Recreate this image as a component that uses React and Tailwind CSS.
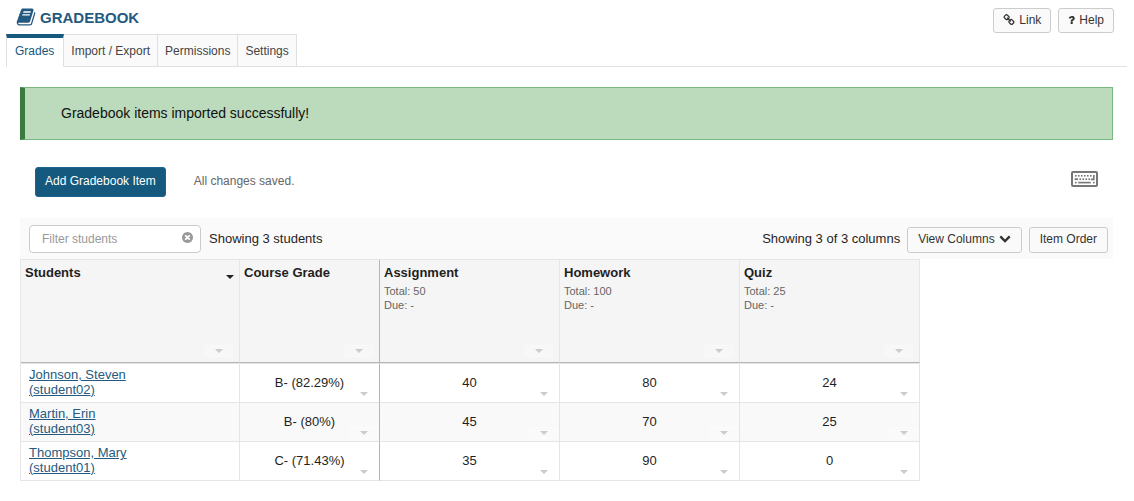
import React from "react";

const FONT = "font-['Liberation_Sans',Arial,sans-serif]";

const PATHS = {
  book: "M1703 478q40 57 18 129l-275 906q-19 64-76.5 107.5t-122.5 43.5h-923q-77 0-148.5-53.5t-99.5-131.5q-24-67-2-127 0-4 3-27t4-37q1-8-3-21.5t-3-19.5q2-11 8-21t16.5-23.5 16.5-23.5q23-38 45-91.5t30-91.5q3-10 .5-30t-.5-28q3-11 17-28t17-23q21-36 42-92t25-90q1-9-2.5-32t.5-28q4-13 22-30.5t22-22.5q19-26 42.5-84.5t27.5-96.5q1-8-3-25.5t-2-26.5q2-8 9-18t18-23 17-21q8-12 16.5-30.5t15-35 16-36 19.5-32 26.5-23.5 36-11.5 47.5 5.5l-1 3q38-9 51-9h761q74 0 114 56t18 130l-274 906q-36 119-71.5 153.5t-128.5 34.5h-869q-27 0-38 15-11 16-1 43 24 70 144 70h923q29 0 56-15.5t35-41.5l300-987q7-22 5-57 38 15 59 43zm-1064 2q-4 13 2 22.5t20 9.5h608q13 0 25.5-9.5t16.5-22.5l21-64q4-13-2-22.5t-20-9.5h-608q-13 0-25.5 9.5t-16.5 22.5zm-83 256q-4 13 2 22.5t20 9.5h608q13 0 25.5-9.5t16.5-22.5l21-64q4-13-2-22.5t-20-9.5h-608q-13 0-25.5 9.5t-16.5 22.5z",
  link: "M1520 1216q0-40-28-68l-208-208q-28-28-68-28-42 0-72 32 3 3 19 18.5t21.5 21.5 15 19 13 25.5 3.5 27.5q0 40-28 68t-68 28q-15 0-27.5-3.5t-25.5-13-19-15-21.5-21.5-18.5-19q-33 31-33 73 0 40 28 68l206 207q27 27 68 27 40 0 68-26l147-146q28-28 28-67zm-703-705q0-40-28-68l-206-207q-28-28-68-28-39 0-68 27l-147 146q-28 28-28 67 0 40 28 68l208 208q27 27 68 27 42 0 72-31-3-3-19-18.5t-21.5-21.5-15-19-13-25.5-3.5-27.5q0-40 28-68t68-28q15 0 27.5 3.5t25.5 13 19 15 21.5 21.5 18.5 19q33-31 33-73zm895 705q0 120-85 203l-147 146q-83 83-203 83-121 0-204-85l-206-207q-83-83-83-203 0-123 88-209l-88-88q-86 88-208 88-120 0-204-84l-208-208q-84-84-84-204t85-203l147-146q83-83 203-83 121 0 204 85l206 207q83 83 83 203 0 123-88 209l88 88q86-88 208-88 120 0 204 84l208 208q84 84 84 204z",
  question: "M1088 1256v240q0 16-12 28t-28 12h-240q-16 0-28-12t-12-28v-240q0-16 12-28t28-12h240q16 0 28 12t12 28zm316-600q0 54-15.5 101t-35 76.5-55 59.5-57.5 43.5-61 35.5q-41 23-68.5 65t-27.5 67q0 17-12 32.5t-28 15.5h-240q-15 0-25.5-18.5t-10.5-37.5v-45q0-83 65-156.5t143-108.5q59-27 84-56t25-76q0-42-46.5-74t-107.5-32q-65 0-108 29-35 25-107 115-13 16-31 16-12 0-25-8l-164-125q-13-10-15.5-25t5.5-28q160-266 464-266 80 0 161 31t146 83 106 127.5 41 158.5z",
  clear: "M1277 1122q0-26-19-45l-181-181 181-181q19-19 19-45 0-27-19-46l-90-90q-19-19-46-19-26 0-45 19l-181 181-181-181q-19-19-45-19-27 0-46 19l-90 90q-19 19-19 46 0 26 19 45l181 181-181 181q-19 19-19 45 0 27 19 46l90 90q19 19 46 19 26 0 45-19l181-181 181 181q19 19 45 19 27 0 46-19l90-90q19-19 19-46zm387-226q0 209-103 385.5t-279.5 279.5-385.5 103-385.5-103-279.5-279.5-103-385.5 103-385.5 279.5-279.5 385.5-103 385.5 103 279.5 279.5 103 385.5z",
  chevron: "M1683 808l-742 741q-19 19-45 19t-45-19l-742-741q-19-19-19-45.5t19-45.5l166-165q19-19 45-19t45 19l531 531 531-531q19-19 45-19t45 19l166 165q19 19 19 45.5t-19 45.5z",
};

function Glyph({ name, box = "0 0 1792 1792", className }) {
  return (
    <svg viewBox={box} fill="currentColor" aria-hidden="true" className={className}>
      <path d={PATHS[name]} />
    </svg>
  );
}

function KeyboardGlyph() {
  const top = [4, 7, 10, 13, 16, 19];
  const middle = [8.5, 11.5, 14.5, 17.5];
  return (
    <svg viewBox="0 0 27 16" fill="currentColor" aria-hidden="true" className="h-4 w-[27px]">
      <path d="M2 0h23a2 2 0 0 1 2 2v12a2 2 0 0 1-2 2H2a2 2 0 0 1-2-2V2a2 2 0 0 1 2-2zm0 2v12h23V2z" />
      {top.map((x) => (
        <rect key={x} x={x} y="4" width="1.6" height="1.6" />
      ))}
      <path d="M22 4h1.6v5.2h-3.6V7.5H22z" />
      <rect x="3.6" y="7.3" width="3.4" height="1.8" />
      {middle.map((x) => (
        <rect key={x} x={x} y="7.3" width="1.6" height="1.8" />
      ))}
      <rect x="4" y="10.8" width="1.6" height="1.6" />
      <rect x="7.2" y="10.8" width="12.6" height="1.6" />
      <rect x="22" y="10.8" width="1.6" height="1.6" />
    </svg>
  );
}

function Caret({ className }) {
  return (
    <svg viewBox="0 0 8 4" fill="currentColor" aria-hidden="true" className={className}>
      <path d="M0 0h8L4 4z" />
    </svg>
  );
}

function MenuButton({ label, className }) {
  return (
    <button
      type="button"
      aria-label={label}
      className={`flex h-3 w-[29px] items-center justify-center rounded-sm border border-white/30 bg-white/20 text-[#cccccc] ${className}`}
    >
      <Caret className="h-1 w-2" />
    </button>
  );
}

const buttonStyle =
  "flex items-center rounded-[3px] border border-[#cccccc] bg-[#fafafa] text-xs text-[#333333]";

const tabs = ["Import / Export", "Permissions", "Settings"];

const columns = [
  { name: "Assignment", total: 50 },
  { name: "Homework", total: 100 },
  { name: "Quiz", total: 25 },
];

const students = [
  { name: "Johnson, Steven", id: "student02", grade: "B- (82.29%)", scores: [40, 80, 24] },
  { name: "Martin, Erin", id: "student03", grade: "B- (80%)", scores: [45, 70, 25] },
  { name: "Thompson, Mary", id: "student01", grade: "C- (71.43%)", scores: [35, 90, 0] },
];

function ValueCell({ value, label, edge }) {
  return (
    <td className={`border-r border-b border-b-[#e5e5e5] p-0 ${edge}`}>
      <div className="grid h-[38px]">
        <span className="col-start-1 row-start-1 self-center text-center">{value}</span>
        <MenuButton label={label} className="col-start-1 row-start-1 mr-px mb-[2px] self-end justify-self-end" />
      </div>
    </td>
  );
}

function HeadCell({ name, edge, sorted, children }) {
  return (
    <th scope="col" className={`border-r border-b border-b-[#b5b5b5] p-0 text-left ${edge}`}>
      <div className="flex h-[102px] flex-col justify-between pt-1 pr-[6px] pb-[5px] pl-1">
        <div>
          <div className="flex items-center justify-between leading-[18px]">
            <span>{name}</span>
            {sorted && <Caret className="mt-2 -mr-px h-1 w-2 text-[#222222]" />}
          </div>
          {children}
        </div>
        <MenuButton label={`${name} options`} className="self-end" />
      </div>
    </th>
  );
}

export default function App() {
  return (
    <div className={`${FONT} bg-white text-[13px] text-[#1f1f1f]`}>
      <header className="flex items-start justify-between pt-2 pr-5 pl-4">
        <h1 className="flex h-[26px] items-start gap-1 text-[15px] leading-5 font-bold text-[#245a80]">
          <Glyph name="book" className="-mt-px h-5 w-5" />
          <span>GRADEBOOK</span>
        </h1>
        <div className="flex gap-[7px]">
          <button type="button" className={`${buttonStyle} -mb-2 h-[25px] gap-1 px-[9px] pb-[2px]`}>
            <Glyph name="link" className="h-3 w-3" />
            Link
          </button>
          <button type="button" className={`${buttonStyle} -mb-2 h-[25px] gap-1 px-[9px] pb-[2px]`}>
            <Glyph name="question" box="352 128 1088 1536" className="h-[10px] w-[7px]" />
            Help
          </button>
        </div>
      </header>

      <nav className="mr-[7px] ml-[6px] flex h-[33px] border-b border-[#e0e0e0] text-xs text-[#444444]">
        <a
          href="#grades"
          aria-current="page"
          className="-mb-px flex items-center border-t-4 border-r border-l border-t-[#15597e] border-r-[#e0e0e0] border-l-[#e0e0e0] bg-white pr-[9px] pb-1 pl-2 text-[#15597e]"
        >
          Grades
        </a>
        {tabs.map((tab) => (
          <a
            key={tab}
            href={`#${tab.toLowerCase().replace(/[^a-z]+/g, "-")}`}
            className="flex items-center border-t border-r border-[#e0e0e0] bg-[#fafafa] px-[7px]"
          >
            {tab}
          </a>
        ))}
      </nav>

      <main className="pt-5 pr-[21px] pb-5 pl-5">
        <div
          role="status"
          className="border border-l-[5px] border-[#79b981] border-l-[#3b7a40] bg-[#bbdbbc] py-4 pl-9 text-sm leading-[19px] text-[#111111]"
        >
          Gradebook items imported successfully!
        </div>

        <div className="flex h-[78px] items-center pt-[5px] pr-[15px] pl-[15px] text-xs">
          <button
            type="button"
            className="h-[30px] rounded-[3px] border border-[#1f6391] bg-[#15597e] px-[9px] pb-[2px] text-white"
          >
            Add Gradebook Item
          </button>
          <span className="ml-7 pb-[2px] text-[#666666]">All changes saved.</span>
          <button type="button" aria-label="Keyboard shortcuts" className="mb-[5px] ml-auto text-[#777777]">
            <KeyboardGlyph />
          </button>
        </div>

        <div className="flex h-[41px] items-center justify-between bg-[#fafafa] pr-[5px] pl-[9px]">
          <div className="flex items-center gap-2">
            <div className="flex h-7 w-[172px] items-center rounded-[4px] border border-[#cccccc] bg-white pr-[7px] pl-3">
              <input
                type="text"
                aria-label="Filter students"
                placeholder="Filter students"
                className="min-w-0 flex-1 text-xs placeholder:text-[#999999] focus:outline-none"
              />
              <button type="button" aria-label="Clear filter" className="mb-[2px] text-[#999999]">
                <Glyph name="clear" box="128 128 1536 1536" className="h-[11px] w-[11px]" />
              </button>
            </div>
            <span>Showing 3 students</span>
          </div>
          <div className="flex items-center">
            <span>Showing 3 of 3 columns</span>
            <button type="button" className={`${buttonStyle} mt-[2px] ml-[7px] h-[26px] gap-1 px-[10px] pb-[2px]`}>
              View Columns
              <Glyph name="chevron" box="0 128 1792 1792" className="h-3 w-3" />
            </button>
            <button type="button" className={`${buttonStyle} mt-[2px] ml-[7px] h-[26px] px-[10px] pb-[2px]`}>
              Item Order
            </button>
          </div>
        </div>

        <table className="w-[900px] table-fixed border-separate border-spacing-0 border-t border-l border-[#e5e5e5]">
          <colgroup>
            <col className="w-[219px]" />
            <col className="w-[140px]" />
            <col />
            <col />
            <col />
          </colgroup>
          <thead className="bg-[#f5f5f5]">
            <tr>
              <HeadCell name="Students" edge="border-r-[#e5e5e5]" sorted />
              <HeadCell name="Course Grade" edge="border-r-[#b5b5b5]" />
              {columns.map((column) => (
                <HeadCell key={column.name} name={column.name} edge="border-r-[#e5e5e5]">
                  <div className="mt-[2px] text-[11px] leading-[14px] font-normal text-[#666666]">
                    <div>Total: {column.total}</div>
                    <div>Due: -</div>
                  </div>
                </HeadCell>
              ))}
            </tr>
          </thead>
          <tbody>
            {students.map((student) => (
              <tr key={student.id} className="even:bg-[#f9f9f9] first:*:border-t first:*:border-t-[#e5e5e5]">
                <th
                  scope="row"
                  className="border-r border-b border-[#e5e5e5] p-0 pl-2 text-left align-top font-normal"
                >
                  <a href={`#${student.id}`} className="block pt-[3px] leading-[15px] text-[#245a80] underline">
                    {student.name}
                    <br />({student.id})
                  </a>
                </th>
                <ValueCell
                  value={student.grade}
                  label={`Course grade options for ${student.name}`}
                  edge="border-r-[#b5b5b5]"
                />
                {columns.map((column, index) => (
                  <ValueCell
                    key={column.name}
                    value={student.scores[index]}
                    label={`${column.name} options for ${student.name}`}
                    edge="border-r-[#e5e5e5]"
                  />
                ))}
              </tr>
            ))}
          </tbody>
        </table>
      </main>
    </div>
  );
}
